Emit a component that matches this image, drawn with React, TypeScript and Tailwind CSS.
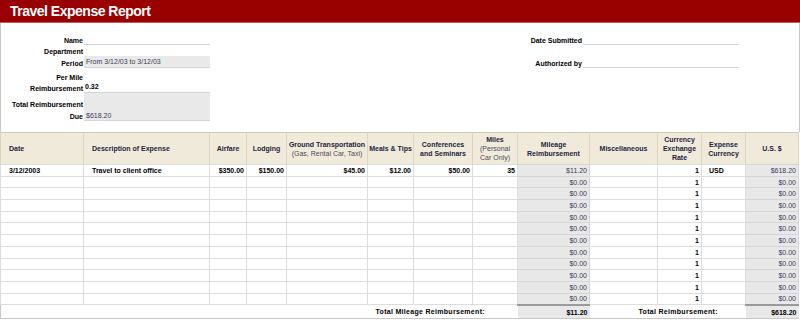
import React from "react";

const COLS = [83, 126, 37, 40, 81, 46, 59, 45, 72, 68, 44, 44, 53];

const font = { fontFamily: '"Liberation Sans", Arial, sans-serif' };

function InfoRow({
  label,
  value,
  line,
  shade,
  h,
}: {
  label: React.ReactNode;
  value?: string;
  line?: boolean;
  shade?: boolean;
  h: string;
}) {
  return (
    <div className={`flex items-end ${h}`}>
      <div className="w-[83px] shrink-0 pr-[1px] text-right font-bold leading-[9px] text-black">
        {label}
      </div>
      <div
        className={`h-full w-[126px] shrink-0 flex items-end pl-[2px] pb-[1px] leading-[9px] text-[#3b3b55] ${
          shade ? "bg-[#e9e9e9]" : ""
        } ${line ? "border-b border-[#d4d4d4]" : ""}`}
      >
        {value}
      </div>
    </div>
  );
}

function HeadCell({
  children,
  align = "center",
}: {
  children: React.ReactNode;
  align?: "left" | "center";
}) {
  return (
    <th
      className={`border-x border-[#dcd5c4] px-[1px] align-middle font-bold leading-[9px] text-[#1d2540] ${
        align === "left" ? "pl-[8px] text-left" : "text-center"
      }`}
    >
      {children}
    </th>
  );
}

export default function App() {
  const rows = Array.from({ length: 12 }, (_, i) => i);

  return (
    <div
      className="w-[800px] h-[320px] overflow-hidden bg-white text-[7px]"
      style={font}
    >
      {/* title bar */}
      <div className="h-[23px] bg-[#990000] border-b border-[#c45a5a] flex items-center pl-[10px]">
        <span className="text-[14px] font-bold text-white leading-none tracking-[-0.5px]">
          Travel Expense Report
        </span>
      </div>

      {/* info area */}
      <div className="h-[109px] border-x border-[#c8c8c8] flex">
        <div className="w-[400px] pt-[11px] flex flex-col">
          <InfoRow label="Name" line h="h-[11px]" />
          <InfoRow label="Department" h="h-[11px]" />
          <InfoRow
            label="Period"
            value="From 3/12/03 to 3/12/03"
            shade
            line
            h="h-[12px]"
          />
          <div className="h-[5px]" />
          <InfoRow label="Per Mile" h="h-[9px]" />
          <div className="flex items-end h-[11px]">
            <div className="w-[83px] shrink-0 pr-[1px] text-right font-bold leading-[9px]">
              Reimbursement
            </div>
            <div className="w-[126px] h-full border-b border-[#d4d4d4] pl-[1px] font-bold leading-[9px] flex items-end pb-[1px]">
              0.32
            </div>
          </div>
          <div className="flex h-[28px]">
            <div className="w-[83px] shrink-0 pr-[1px] text-right font-bold leading-[9px] flex flex-col justify-end">
              <div>Total Reimbursement</div>
              <div className="mt-[3px]">Due</div>
            </div>
            <div className="w-[126px] h-full bg-[#e9e9e9] border-b border-[#d4d4d4] pl-[2px] leading-[9px] text-[#3b3b55] flex items-end">
              $618.20
            </div>
          </div>
        </div>
        <div className="flex-1 pt-[12px] flex flex-col">
          <div className="flex items-end h-[10px]">
            <div className="w-[182px] shrink-0 pr-[1px] text-right font-bold leading-[9px]">
              Date Submitted
            </div>
            <div className="w-[156px] h-full border-b border-[#d4d4d4]" />
          </div>
          <div className="h-[13px]" />
          <div className="flex items-end h-[10px]">
            <div className="w-[182px] shrink-0 pr-[1px] text-right font-bold leading-[9px]">
              Authorized by
            </div>
            <div className="w-[156px] h-full border-b border-[#d4d4d4]" />
          </div>
        </div>
      </div>

      {/* expense table */}
      <table className="table-fixed border-collapse w-[798px] border-l border-[#c8c8c8]">
        <colgroup>
          {COLS.map((w, i) => (
            <col key={i} style={{ width: w }} />
          ))}
        </colgroup>
        <thead>
          <tr className="h-[32px] bg-[#f0eadb] border-t border-b border-[#d2cab6]">
            <HeadCell align="left">Date</HeadCell>
            <HeadCell align="left">Description of Expense</HeadCell>
            <HeadCell>Airfare</HeadCell>
            <HeadCell>Lodging</HeadCell>
            <HeadCell>
              <div className="whitespace-nowrap">Ground Transportation</div>
              <div className="whitespace-nowrap font-normal text-[#4a4a5e]">
                (Gas, Rental Car, Taxi)
              </div>
            </HeadCell>
            <HeadCell>
              <span className="whitespace-nowrap">Meals &amp; Tips</span>
            </HeadCell>
            <HeadCell>Conferences and Seminars</HeadCell>
            <HeadCell>
              Miles
              <div className="font-normal text-[#4a4a5e]">(Personal Car Only)</div>
            </HeadCell>
            <HeadCell>Mileage Reimbursement</HeadCell>
            <HeadCell>Miscellaneous</HeadCell>
            <HeadCell>Currency Exchange Rate</HeadCell>
            <HeadCell>Expense Currency</HeadCell>
            <HeadCell>U.S. $</HeadCell>
          </tr>
        </thead>
        <tbody className="leading-[9px]">
          {rows.map((i) => {
            const first = i === 0;
            const td = "border border-[#dddddd] px-[2px] p-0";
            const gray = "border border-[#d6d6d6] bg-[#e8e8e8] px-[2px] text-right text-[#3b3b55]";
            return (
              <tr key={i} className="h-[11.7px]">
                <td className={`${td} pl-[8px] font-bold`}>{first ? "3/12/2003" : ""}</td>
                <td className={`${td} pl-[8px] font-bold`}>
                  {first ? "Travel to client office" : ""}
                </td>
                <td className={`${td} text-right font-bold`}>{first ? "$350.00" : ""}</td>
                <td className={`${td} text-right font-bold`}>{first ? "$150.00" : ""}</td>
                <td className={`${td} text-right font-bold`}>{first ? "$45.00" : ""}</td>
                <td className={`${td} text-right font-bold`}>{first ? "$12.00" : ""}</td>
                <td className={`${td} text-right font-bold`}>{first ? "$50.00" : ""}</td>
                <td className={`${td} text-right font-bold`}>{first ? "35" : ""}</td>
                <td className={gray}>{first ? "$11.20" : "$0.00"}</td>
                <td className={td}></td>
                <td className={`${td} text-right font-bold`}>1</td>
                <td className={`${td} pl-[7px] font-bold`}>{first ? "USD" : ""}</td>
                <td className={gray}>{first ? "$618.20" : "$0.00"}</td>
              </tr>
            );
          })}
          <tr className="h-[14px] border-b border-[#c8c8c8]">
            <td colSpan={4}></td>
            <td colSpan={4} className="pl-[8px] font-bold text-left align-middle">
              <span className="ml-[81px] tracking-[0.3px]">Total Mileage Reimbursement:</span>
            </td>
            <td className="bg-[#e8e8e8] border-t-2 border-t-[#9a9a9a] px-[2px] text-right font-bold text-black">
              $11.20
            </td>
            <td colSpan={3} className="pl-[49px] font-bold text-left">
              <span className="tracking-[0.3px]">Total Reimbursement:</span>
            </td>
            <td className="bg-[#e8e8e8] border-t-2 border-t-[#9a9a9a] px-[2px] text-right font-bold text-black">
              $618.20
            </td>
          </tr>
        </tbody>
      </table>
    </div>
  );
}
